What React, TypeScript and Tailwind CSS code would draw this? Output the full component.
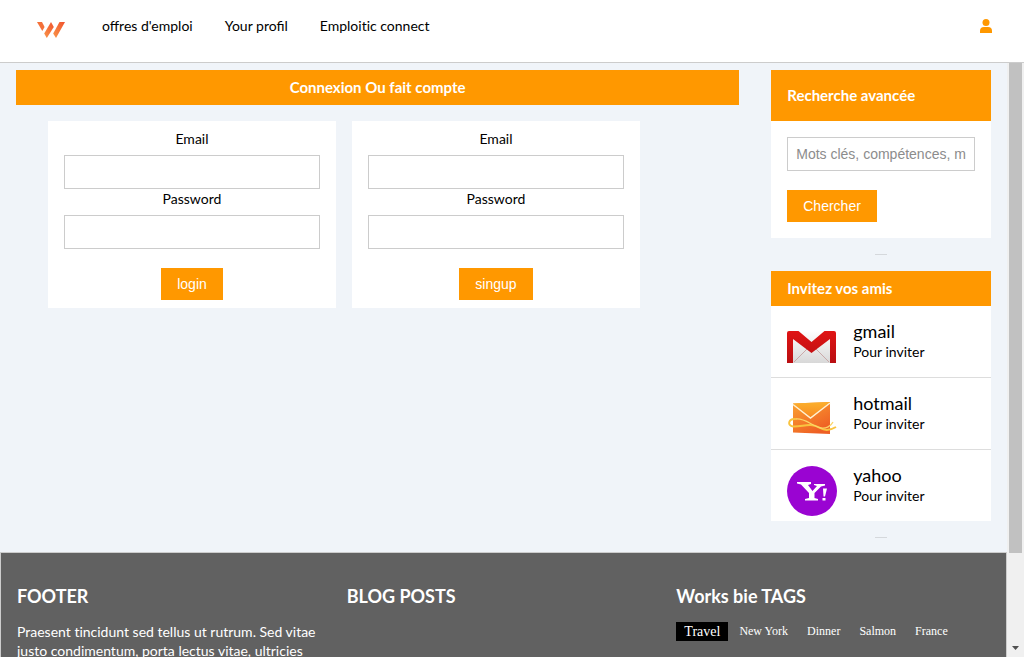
import React from 'react';

const links = ["offres d'emploi", 'Your profil'];

function Logo() {
  return (
    <svg className="h-4 w-7" viewBox="0 0 28 16" aria-hidden="true">
      <defs>
        <linearGradient id="logo" x1="0" y1="1" x2="1" y2="0">
          <stop offset="0" stopColor="#f9964a" />
          <stop offset="1" stopColor="#f0522d" />
        </linearGradient>
      </defs>
      <path d="M0 0H5L7.600 5L5.300 9Z" fill="#f4713a" />
      <path d="M14 0L16.800 5L9.800 16L7.200 11.500Z" fill="url(#logo)" />
      <path d="M22.500 0H28L19 16L16.200 11.500Z" fill="url(#logo)" />
    </svg>
  );
}

function UserIcon() {
  return (
    <svg className="h-3.5 w-3" viewBox="0 0 12 14" fill="#ff9800" aria-hidden="true">
      <circle cx="6" cy="3.500" r="3.500" />
      <path d="M0 14V12Q0 8 4 8H8Q12 8 12 12V14Z" />
    </svg>
  );
}

function GmailIcon() {
  return (
    <svg className="size-[50px] shrink-0" viewBox="0 0 50 50" aria-hidden="true">
      <defs>
        <linearGradient id="paper" x1="0" y1="0" x2="0" y2="1">
          <stop offset="0" stopColor="#ffffff" />
          <stop offset="1" stopColor="#d8d8d8" />
        </linearGradient>
        <linearGradient id="red" x1="0" y1="0" x2="0" y2="1">
          <stop offset="0" stopColor="#e01414" />
          <stop offset="1" stopColor="#b90f12" />
        </linearGradient>
      </defs>
      <rect x="1" y="8.500" width="47" height="32.500" fill="url(#paper)" />
      <path d="M7 40L20 27M42 40L29 27" stroke="#c9a9a9" fill="none" />
      <path d="M0 11Q0 9 2 9H11.500L24.500 20L37.500 9H47Q49 9 49 11V41H43V17L24.500 31L6 17V41H0Z" fill="url(#red)" />
    </svg>
  );
}

function HotmailIcon() {
  return (
    <svg className="size-[50px] shrink-0" viewBox="0 0 50 50" aria-hidden="true">
      <defs>
        <linearGradient id="mail" x1="0" y1="0" x2="0.600" y2="1">
          <stop offset="0" stopColor="#fba331" />
          <stop offset="1" stopColor="#ee5f24" />
        </linearGradient>
        <linearGradient id="flap" x1="0" y1="0" x2="0" y2="1">
          <stop offset="0" stopColor="#fbb02c" />
          <stop offset="1" stopColor="#f98c22" />
        </linearGradient>
      </defs>
      <path d="M6 9.500L43 8V40L6 38.500Z" fill="url(#mail)" />
      <path d="M6 9.500L43 8L24 23Z" fill="url(#flap)" />
      <path d="M6 10.500L23.500 24L43 9" fill="none" stroke="#fff2d0" strokeWidth="1.500" />
      <path d="M9 25C1 24 0 32 6 32.500C16 33 23 28 33 34C38 37 44 36 49 33" fill="none" stroke="#f9c440" strokeWidth="2" />
      <path d="M9 25C18 24 25 32 34 34C39 35 44 32 46 28" fill="none" stroke="#fbd668" strokeWidth="1.300" />
    </svg>
  );
}

function YahooIcon() {
  return (
    <svg className="size-[50px] shrink-0" viewBox="0 0 50 50" aria-hidden="true">
      <circle cx="25" cy="25" r="25" fill="#9a04d2" />
      <path d="M10 16H24V18L21 19L25.500 25L30 20L27 19V18H38V19.500L34 20.500L27.500 27V32L31 33V34.500H18V33L22 32V27L14 18.500L10 17.500Z" fill="#fff" />
      <path d="M36 22.500H40L38 30.500H36.500ZM35.500 32H38.500V34.500H35.500Z" fill="#fff" />
    </svg>
  );
}

const friends = [
  { name: 'gmail', Icon: GmailIcon },
  { name: 'hotmail', Icon: HotmailIcon },
  { name: 'yahoo', Icon: YahooIcon },
];

function AccountForm({ id, action }: { id: string; action: string }) {
  const field = 'block h-[34px] w-full border border-[#ccc] bg-white px-2';
  return (
    <form className="flex w-72 flex-col bg-white px-4 py-2 text-center" onSubmit={(e) => e.preventDefault()}>
      <label htmlFor={id + '-email'} className="mb-1.5">Email</label>
      <input id={id + '-email'} type="email" className={field} />
      <label htmlFor={id + '-password'} className="mb-1.5">Password</label>
      <input id={id + '-password'} type="password" className={field} />
      <button className="mt-[19px] h-8 self-center bg-[#ff9800] px-4 font-['Liberation_Sans',sans-serif] text-white">
        {action}
      </button>
    </form>
  );
}

function Divider() {
  return <hr className="mx-auto w-3 border-0 border-t border-[#d5d8dc]" />;
}

export default function App() {
  return (
    <div className="flex h-screen flex-col overflow-hidden bg-[#f0f4f9] font-[Lato,sans-serif] text-sm leading-5 text-black">
      <header className="flex h-[63px] shrink-0 items-start border-b border-[#ccc] bg-white pt-4 pr-8 pl-[37px]">
        <a href="#" aria-label="Accueil" className="mt-1.5 mr-[37px]"><Logo /></a>
        <nav className="flex gap-8">
          {links.map((l) => <a key={l} href="#">{l}</a>)}
          <a href="#" className="[font-variant-ligatures:none]">Emploitic connect</a>
        </nav>
        <a href="#" aria-label="Compte" className="mt-[3px] ml-auto"><UserIcon /></a>
      </header>
      <div className="flex min-h-0 flex-1">
        <div className="min-w-0 flex-1 overflow-hidden">
          <div className="flex items-start pt-[7px]">
            <main className="w-3/4 px-4">
              <h1 className="bg-[#ff9800] py-[7px] text-center text-[15px] leading-[21px] font-bold text-white">
                Connexion Ou fait compte
              </h1>
              <div className="flex flex-wrap gap-4 px-8 pt-4">
                <AccountForm id="login" action="login" />
                <AccountForm id="signup" action="singup" />
              </div>
            </main>
            <aside className="flex w-1/4 flex-col gap-4 px-4 pb-3.5">
              <section className="bg-white">
                <h2 className="bg-[#ff9800] px-4 py-[15px] text-[15px] leading-[21px] font-bold text-white">
                  Recherche avancée
                </h2>
                <form className="p-4 font-['Liberation_Sans',sans-serif]" onSubmit={(e) => e.preventDefault()}>
                  <input
                    type="text"
                    aria-label="Mots clés"
                    placeholder="Mots clés, compétences, métier"
                    className="block h-[34px] w-full border border-[#ccc] px-2 placeholder:text-[#8c8c8c]"
                  />
                  <button className="mt-[19px] block h-8 bg-[#ff9800] px-4 text-white">Chercher</button>
                </form>
              </section>
              <Divider />
              <section className="bg-white">
                <h2 className="bg-[#ff9800] px-4 py-[7px] text-[15px] leading-[21px] font-bold text-white">
                  Invitez vos amis
                </h2>
                <ul className="divide-y divide-[#ddd]">
                  {friends.map(({ name, Icon }) => (
                    <li key={name} className="flex gap-4 px-4 pt-4 pb-[5px]">
                      <Icon />
                      <div>
                        <div className="mb-0.5 text-lg leading-[18px]">{name}</div>
                        <div>Pour inviter</div>
                      </div>
                    </li>
                  ))}
                </ul>
              </section>
              <Divider />
            </aside>
          </div>
          <footer className="grid grid-cols-3 border border-[#ccc] bg-[#616161] pt-[31px] pb-8 pl-4 text-white">
            <section className="pr-4">
              <h3 className="mb-3.5 text-lg leading-6 font-bold">FOOTER</h3>
              <p className="leading-[19px] [font-variant-ligatures:none]">
                Praesent tincidunt sed tellus ut rutrum. Sed vitae justo condimentum, porta lectus vitae, ultricies
              </p>
            </section>
            <section>
              <h3 className="text-lg leading-6 font-bold">BLOG POSTS</h3>
            </section>
            <section>
              <h3 className="mb-3.5 text-lg leading-6 font-bold">Works bie TAGS</h3>
              <ul className="flex gap-[3px] font-['Liberation_Serif',serif] text-xs leading-[19px]">
                <li className="bg-black px-2 text-sm leading-[19px]">Travel</li>
                {['New York', 'Dinner', 'Salmon', 'France'].map((t) => (
                  <li key={t} className="px-2">{t}</li>
                ))}
              </ul>
            </section>
          </footer>
        </div>
        <div className="flex w-[17px] shrink-0 flex-col items-center justify-between bg-[#f0f0f0]" aria-hidden="true">
          <div className="h-[490px] w-[13px] bg-[#c1c1c1]" />
          <svg className="mb-[7px] h-1 w-[7px]" viewBox="0 0 7 4"><path d="M0 0H7L3.500 4Z" fill="#505050" /></svg>
        </div>
      </div>
    </div>
  );
}
